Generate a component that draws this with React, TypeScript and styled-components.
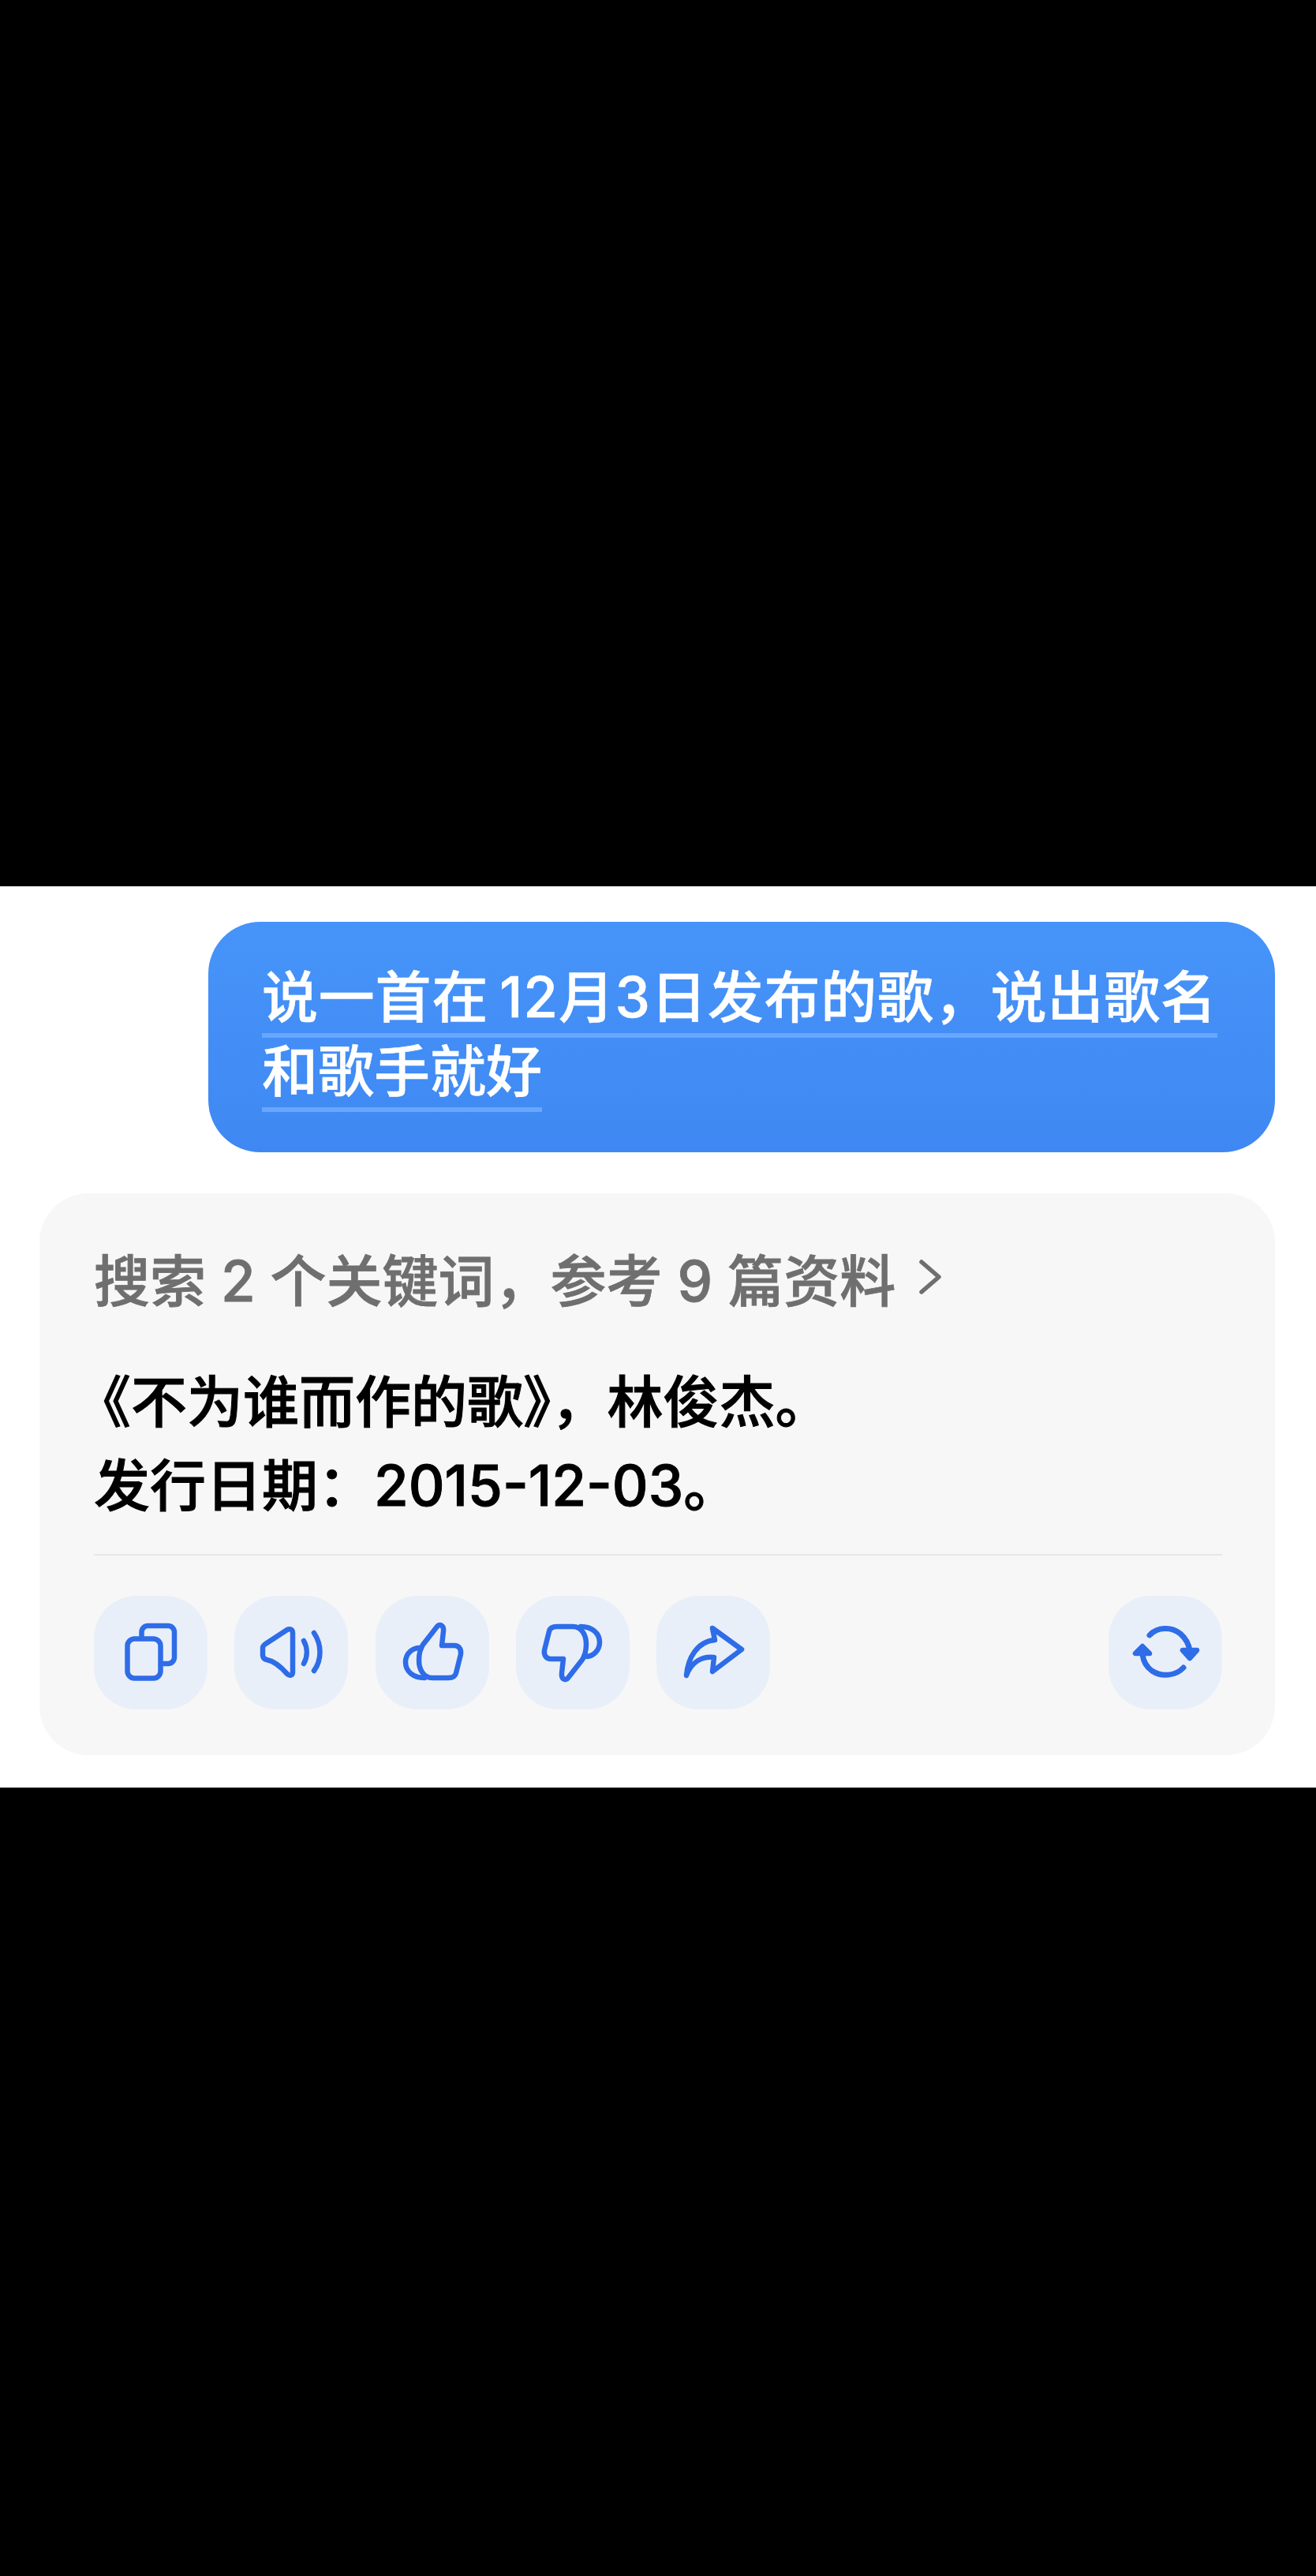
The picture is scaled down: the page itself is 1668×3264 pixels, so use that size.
import styled, { createGlobalStyle } from "styled-components";

const GlobalStyle = createGlobalStyle`
  html, body {
    margin: 0;
    padding: 0;
    background: #000;
  }
`;

const fontStack = `Inter, "Noto Sans CJK SC", sans-serif`;

const Page = styled.div`
  width: 1668px;
  height: 3264px;
  display: flex;
  flex-direction: column;
  background: #000;
  font-family: ${fontStack};
`;

const Letterbox = styled.div<{ $height: number }>`
  height: ${({ $height }) => $height}px;
  background: #000;
`;

const Sheet = styled.main`
  height: 1142px;
  box-sizing: border-box;
  padding: 45px 52px 0 50px;
  background: #fff;
  display: flex;
  flex-direction: column;
  align-items: flex-end;
`;

const Bubble = styled.div`
  width: 1352px;
  height: 292px;
  box-sizing: border-box;
  padding: 53px 0 0 68px;
  border-radius: 66px;
  background: linear-gradient(180deg, #4694f9 0%, #3f88f3 100%);
  color: #fff;
  font-size: 71px;
  font-weight: 500;
  word-spacing: -6px;
  -webkit-text-stroke: 0.5px currentColor;
`;

const BubbleLine = styled.div<{ $tracking: number }>`
  width: fit-content;
  height: 94px;
  box-sizing: border-box;
  line-height: 84px;
  letter-spacing: ${({ $tracking }) => $tracking}px;
  border-bottom: 6px solid #69a6fd;
  white-space: nowrap;
`;

const Card = styled.section`
  width: 100%;
  height: 712px;
  margin-top: 52px;
  box-sizing: border-box;
  padding: 66px 67px 0 69px;
  border-radius: 62px;
  background: #f7f7f7;
`;

const SearchRow = styled.div`
  display: flex;
  align-items: center;
  height: 80px;
  color: #6f6f6f;
  font-size: 71px;
  font-weight: 500;
  white-space: pre;
  -webkit-text-stroke: 0.8px currentColor;
`;

const Answer = styled.div`
  margin-top: 65px;
  color: #000;
  font-size: 71px;
  font-weight: 500;
  line-height: 106px;
  white-space: nowrap;
  -webkit-text-stroke: 1px currentColor;
`;

const OpeningQuote = styled.span`
  margin-left: -24px;
`;

const Divider = styled.div`
  margin-top: 34px;
  height: 2px;
  background: #e7e7e7;
`;

const Actions = styled.div`
  display: flex;
  gap: 34.25px;
  margin-top: 51px;
`;

const ActionButton = styled.button<{ $pushed?: boolean }>`
  width: 144px;
  height: 144px;
  padding: 0;
  border: 0;
  border-radius: 54px;
  background: #e9eff9;
  margin-left: ${({ $pushed }) => ($pushed ? "auto" : "0")};
`;

const Icon = styled.svg.attrs({ viewBox: "0 0 144 144" })`
  display: block;
  width: 144px;
  height: 144px;
  fill: none;
  stroke: #2e6ce8;
  stroke-width: 6.5px;
  stroke-linecap: round;
  stroke-linejoin: round;
`;

const Chevron = styled.svg.attrs({ viewBox: "0 0 32 48" })`
  width: 32px;
  height: 48px;
  margin-left: 28px;
  fill: none;
  stroke: #6f6f6f;
  stroke-width: 5.5px;
  stroke-linecap: round;
  stroke-linejoin: round;
`;

const thumbUp = (
  <>
    <path d="M78 39 L60 62 C56 68 55 76 55 82 C55 92 60 104 72 104 L92 104 C97 104 101 102 102 98 L108 74 C109 67 105 63 100 63 L84 63 L86 45 C87 37 81 35 78 39 Z" />
    <path d="M58 66 C46 65 38 74 38 84 C38 96 48 104 62 104" />
  </>
);

const App = () => {
  return (
    <Page>
      <GlobalStyle />
      <Letterbox $height={1123} />
      <Sheet>
        <Bubble>
          <BubbleLine $tracking={0.8}>说一首在 12月3日发布的歌，说出歌名</BubbleLine>
          <BubbleLine $tracking={0}>和歌手就好</BubbleLine>
        </Bubble>
        <Card>
          <SearchRow>
            搜索 2 个关键词，参考 9 篇资料
            <Chevron>
              <path d="M5 5 L27 24 L5 43" />
            </Chevron>
          </SearchRow>
          <Answer>
            <OpeningQuote>《</OpeningQuote>不为谁而作的歌》，林俊杰。
            <br />
            发行日期：2015-12-03。
          </Answer>
          <Divider />
          <Actions>
            <ActionButton aria-label="copy">
              <Icon>
                <rect x="42.5" y="54.5" width="42" height="50" rx="9" />
                <path d="M60.5 54 V46 a8 8 0 0 1 8-8 H94 a8 8 0 0 1 8 8 V78 a8 8 0 0 1 -8 8 H85" />
              </Icon>
            </ActionButton>
            <ActionButton aria-label="read aloud">
              <Icon>
                <path d="M41 60 L67 43 C71 41 74 43 74 47 V97 C74 101 70 102 67 99 C60 91 52 83 41 81 C37 80 36 78 36 75 V66 C36 63 38 62 41 60 Z" />
                <path d="M88 57 C93 66 93 77 88 86" />
                <path d="M101 47 C111 62 111 81 101 95" />
              </Icon>
            </ActionButton>
            <ActionButton aria-label="like">
              <Icon>{thumbUp}</Icon>
            </ActionButton>
            <ActionButton aria-label="dislike">
              <Icon>
                <g transform="rotate(180 72 71.5)">{thumbUp}</g>
              </Icon>
            </ActionButton>
            <ActionButton aria-label="share">
              <Icon>
                <path d="M71 41 L108 68 L71 96 L73 78 C58 76 44 84 38 101 C40 78 52 58 74 56 Z" />
              </Icon>
            </ActionButton>
            <ActionButton $pushed aria-label="regenerate">
              <Icon>
                <path d="M52 50 C62 39 80 39 91 48 C98 54 102 62 103 70" strokeWidth="7" />
                <path d="M95 91 C85 102 67 103 55 95 C48 90 44 82 43 74" strokeWidth="7" />
                <path d="M94 69 H112 L103 79 Z" fill="#2e6ce8" />
                <path d="M34 73 H52 L43 64 Z" fill="#2e6ce8" />
              </Icon>
            </ActionButton>
          </Actions>
        </Card>
      </Sheet>
      <Letterbox $height={999} />
    </Page>
  );
};

export default App;
